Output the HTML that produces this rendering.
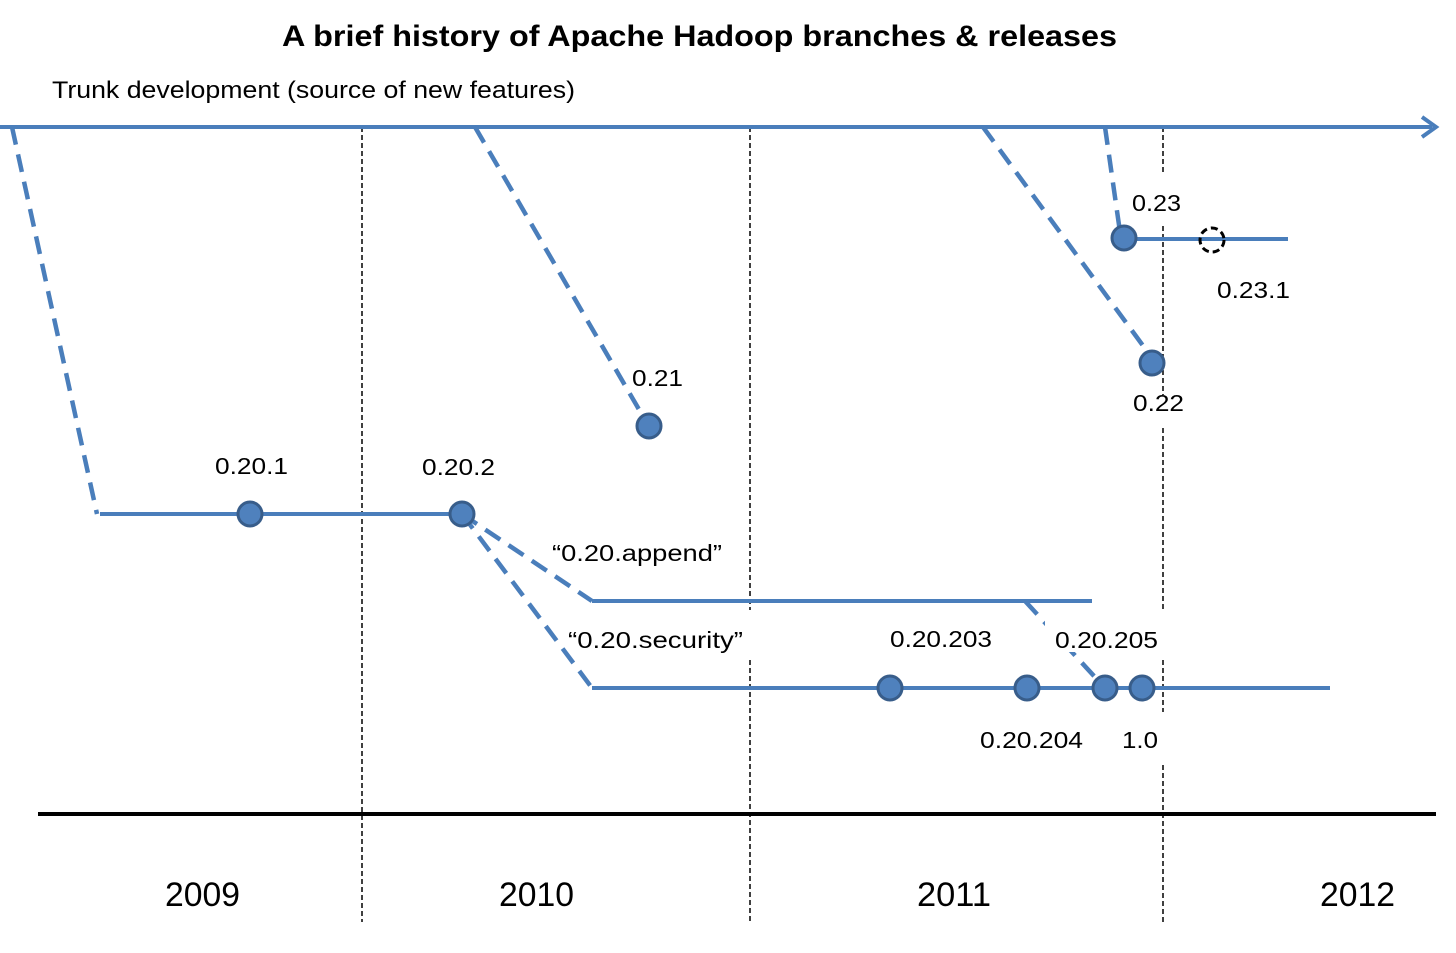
<!DOCTYPE html>
<html><head><style>body{margin:0;background:#fff}svg{display:block}text{font-family:"Liberation Sans",sans-serif;fill:#000}</style></head><body>
<svg width="1456" height="953" viewBox="0 0 1456 953">
<g stroke="#000" stroke-width="1.5" stroke-dasharray="5,3">
<line x1="362" y1="127" x2="362" y2="922"/>
<line x1="750" y1="127" x2="750" y2="610"/>
<line x1="750" y1="660" x2="750" y2="922"/>
<line x1="1163" y1="127" x2="1163" y2="175"/>
<line x1="1163" y1="226" x2="1163" y2="395"/>
<line x1="1163" y1="428" x2="1163" y2="610"/>
<line x1="1163" y1="660" x2="1163" y2="712"/>
<line x1="1163" y1="765" x2="1163" y2="922"/>
</g>
<line x1="38" y1="814" x2="1436" y2="814" stroke="#000" stroke-width="4"/>
<g stroke="#4a7ebb" stroke-width="4" fill="none">
<line x1="0" y1="127" x2="1432" y2="127"/>
<path d="M1422 117 L1436 127 L1422 137" stroke-width="4"/>
<line x1="100" y1="514" x2="462" y2="514"/>
<line x1="592" y1="601" x2="1092" y2="601"/>
<line x1="592" y1="688" x2="1330" y2="688"/>
<line x1="1124" y1="239" x2="1288" y2="239"/>
<g stroke-dasharray="18,10" stroke-width="4.5">
<line x1="12" y1="127" x2="97" y2="514"/>
<line x1="475" y1="127" x2="648" y2="425"/>
<line x1="983" y1="127" x2="1152" y2="358"/>
<line x1="1105" y1="127" x2="1120" y2="232"/>
<line x1="462" y1="514" x2="592" y2="601"/>
<line x1="462" y1="514" x2="592" y2="688"/>
<line x1="1025" y1="601" x2="1105" y2="688"/>
</g>
</g>
<g fill="#fff" stroke="none">
<rect x="1045" y="612" width="120" height="40"/>
</g>
<g fill="#4f81bd" stroke="#385d8a" stroke-width="3">
<circle cx="250" cy="514" r="12"/>
<circle cx="462" cy="514" r="12"/>
<circle cx="649" cy="426" r="12"/>
<circle cx="1152" cy="363" r="12"/>
<circle cx="1124" cy="238" r="12"/>
<circle cx="890" cy="688" r="12"/>
<circle cx="1027" cy="688" r="12"/>
<circle cx="1105" cy="688" r="12"/>
<circle cx="1142" cy="688" r="12"/>
</g>
<circle cx="1212" cy="240" r="12" fill="none" stroke="#000" stroke-width="3" stroke-dasharray="7,4"/>
<text x="282" y="46" font-size="30" font-weight="bold" textLength="835" lengthAdjust="spacingAndGlyphs">A brief history of Apache Hadoop branches &amp; releases</text>
<text x="52" y="98" font-size="24" textLength="523" lengthAdjust="spacingAndGlyphs">Trunk development (source of new features)</text>
<g font-size="23">
<text x="1132" y="211" textLength="49" lengthAdjust="spacingAndGlyphs">0.23</text>
<text x="1217" y="298" textLength="73" lengthAdjust="spacingAndGlyphs">0.23.1</text>
<text x="632" y="386" textLength="51" lengthAdjust="spacingAndGlyphs">0.21</text>
<text x="1133" y="411" textLength="51" lengthAdjust="spacingAndGlyphs">0.22</text>
<text x="215" y="474" textLength="73" lengthAdjust="spacingAndGlyphs">0.20.1</text>
<text x="422" y="475" textLength="73" lengthAdjust="spacingAndGlyphs">0.20.2</text>
<text x="552" y="561" textLength="170" lengthAdjust="spacingAndGlyphs">“0.20.append”</text>
<text x="568" y="648" textLength="175" lengthAdjust="spacingAndGlyphs">“0.20.security”</text>
<text x="890" y="647" textLength="102" lengthAdjust="spacingAndGlyphs">0.20.203</text>
<text x="1055" y="648" textLength="103" lengthAdjust="spacingAndGlyphs">0.20.205</text>
<text x="980" y="748" textLength="103" lengthAdjust="spacingAndGlyphs">0.20.204</text>
<text x="1122" y="748" textLength="36" lengthAdjust="spacingAndGlyphs">1.0</text>
</g>
<g font-size="34">
<text x="165" y="906" textLength="75" lengthAdjust="spacingAndGlyphs">2009</text>
<text x="499" y="906" textLength="75" lengthAdjust="spacingAndGlyphs">2010</text>
<text x="917" y="906" textLength="74" lengthAdjust="spacingAndGlyphs">2011</text>
<text x="1320" y="906" textLength="75" lengthAdjust="spacingAndGlyphs">2012</text>
</g>
</svg>
</body></html>
